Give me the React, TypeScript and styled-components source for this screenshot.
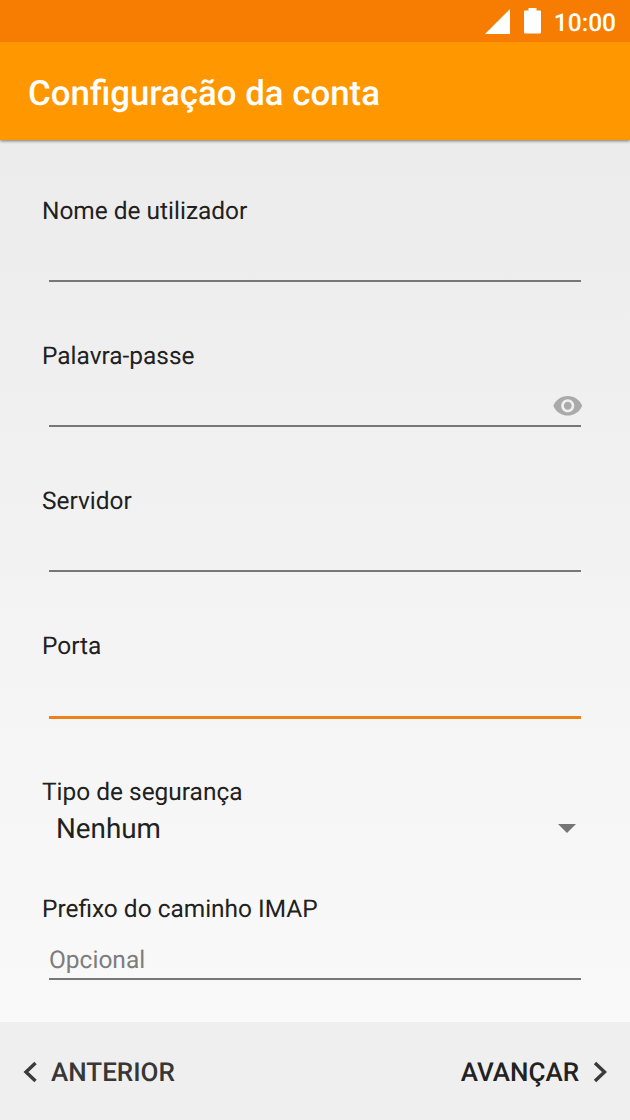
import React from 'react';
import styled, { createGlobalStyle } from 'styled-components';

const Global = createGlobalStyle`
  * { box-sizing: border-box; }
  body { margin: 0; font-family: Roboto, sans-serif; color: #212121; text-rendering: geometricPrecision; }
`;
const Screen = styled.div`
  width: 630px; height: 1120px; overflow: hidden;
  display: flex; flex-direction: column;
  background: linear-gradient(#ececec 140px, #eeeeee 300px, #f5f5f5 710px, #f9f9f9 1022px);
`;
const StatusBar = styled.div`
  height: 42px; flex: none; background: #f77d02; color: #fff;
  display: flex; align-items: center; justify-content: flex-end;
  padding: 2px 14px 0 0; font-size: 24.5px; font-weight: 500; line-height: 28px;
  position: relative; z-index: 2;
`;
const StatusIcon = styled.svg<{ $gap: number }>`
  display: block; flex: none; margin: -2px ${p => p.$gap}px 0 0;
`;
const Clock = styled.span`
  padding-top: 1px;
`;
const AppBar = styled.header`
  height: 98px; flex: none; background: #ff9800; color: #fff;
  display: flex; align-items: center; padding: 5px 28px 0;
  box-shadow: 0 1px 3px rgba(0,0,0,.5); position: relative; z-index: 1;
`;
const Title = styled.h1`
  margin: 0; font-size: 34.85px; font-weight: 500; line-height: 42px;
`;
const Form = styled.main`
  flex: 1; padding: 56px 42px 0; display: flex; flex-direction: column;
`;
const Field = styled.div<{ $height: number }>`
  height: ${p => p.$height}px; flex: none; display: flex; flex-direction: column;
`;
const Label = styled.label`
  font-size: 24.45px; line-height: 29px; white-space: nowrap;
`;
const Input = styled.div<{ $active?: boolean; $height?: number }>`
  height: ${p => p.$height ?? 57}px; margin: 0 7px; padding-top: 17px; flex: none;
  display: flex; align-items: center; justify-content: space-between;
  border-bottom: ${p => (p.$active ? '3px solid #ed821a' : '2px solid #777')};
  color: #7d7d7d; font-size: 24.5px;
`;
const Eye = styled.svg`
  display: block; margin-left: auto; margin-right: -2px; flex: none;
`;
const Select = styled.div`
  height: 45px; padding: 0 12px 0 14px; display: flex; align-items: center; justify-content: space-between;
  font-size: 27.8px;
`;
const Footer = styled.footer`
  height: 98px; flex: none; background: #efefef; display: flex; align-items: center;
  justify-content: space-between; padding: 2px 22px 0;
`;
const NavButton = styled.button<{ $color: string }>`
  border: 0; padding: 0; background: none; color: ${p => p.$color}; display: flex; align-items: center;
  gap: 13px; font: 500 26px/32px Roboto, sans-serif; text-rendering: geometricPrecision;
`;
const NavText = styled.span`
  padding-top: 1px;
`;
const ChevronIcon = styled.svg`
  display: block; flex: none; margin-top: -1px;
`;
const Chevron = ({ d }: { d: string }) => (
  <ChevronIcon width="16" height="22" viewBox="0 0 16 22" fill="none" stroke="#3a3a3a" strokeWidth="3.4"><path d={d} /></ChevronIcon>
);

export default function App() {
  return (
    <>
      <Global />
      <Screen>
        <StatusBar>
          <StatusIcon $gap={14} width="25" height="25" viewBox="0 0 25 25"><path d="M25 0V25H0Z" fill="#fff" /></StatusIcon>
          <StatusIcon $gap={13} width="17" height="26" viewBox="0 0 17 26"><path d="M4.500 0h8v2.500H16q1 0 1 1v21q0 1-1 1H1q-1 0-1-1v-21q0-1 1-1h3.500Z" fill="#fff" /></StatusIcon>
          <Clock>10:00</Clock>
        </StatusBar>
        <AppBar><Title>Configuração da conta</Title></AppBar>
        <Form>
          <Field $height={145}><Label>Nome de utilizador</Label><Input /></Field>
          <Field $height={145}>
            <Label>Palavra-passe</Label>
            <Input>
              <Eye width="31.500" height="31.500" viewBox="0 0 24 24" fill="#aaa"><path d="M12 4.500C7 4.500 2.730 7.610 1 12c1.730 4.390 6 7.500 11 7.500s9.270-3.110 11-7.500c-1.730-4.390-6-7.500-11-7.500zM12 17c-2.760 0-5-2.240-5-5s2.240-5 5-5 5 2.240 5 5-2.240 5-5 5zm0-8c-1.660 0-3 1.340-3 3s1.340 3 3 3 3-1.340 3-3-1.340-3-3-3z" /></Eye>
            </Input>
          </Field>
          <Field $height={145}><Label>Servidor</Label><Input /></Field>
          <Field $height={146}><Label>Porta</Label><Input $active $height={59} /></Field>
          <Field $height={117}>
            <Label>Tipo de segurança</Label>
            <Select><span>Nenhum</span><svg width="18" height="9" viewBox="0 0 18 9"><path d="M0 0H18L9 9Z" fill="#757575" /></svg></Select>
          </Field>
          <Field $height={90}><Label>Prefixo do caminho IMAP</Label><Input>Opcional</Input></Field>
        </Form>
        <Footer>
          <NavButton $color="#373737"><Chevron d="M13.500 2 4 11l9.500 9" /><NavText>ANTERIOR</NavText></NavButton>
          <NavButton $color="#222"><NavText>AVANÇAR</NavText><Chevron d="M3 2 12.500 11 3 20" /></NavButton>
        </Footer>
      </Screen>
    </>
  );
}
